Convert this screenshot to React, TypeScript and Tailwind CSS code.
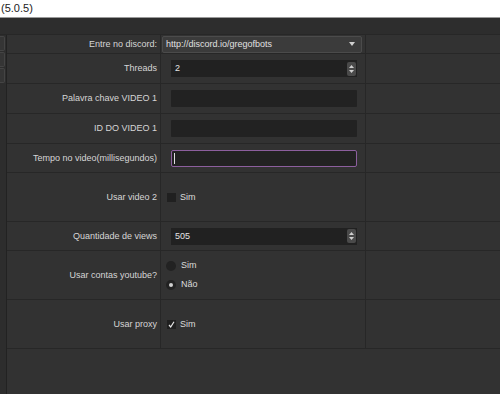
import { ReactNode } from "react";

function Row({ h, label, children }: { h: string; label: string; children?: ReactNode }) {
  return (
    <div className={`flex ${h} border-b border-[#272727]`}>
      <div className="w-[154px] shrink-0 flex items-center justify-end pr-[3px] border-r border-[#272727] text-[#d6d6d6]">
        {label}
      </div>
      <div className="w-[205px] shrink-0 flex flex-col justify-center border-r border-[#272727]">
        {children}
      </div>
      <div className="flex-1" />
    </div>
  );
}

function Spinner() {
  return (
    <div className="w-[9px] h-[14px] bg-[#4a4a4a] rounded-[2px] flex flex-col items-center justify-center gap-[2px] mr-[1px]">
      <svg width="5" height="3" viewBox="0 0 5 3">
        <path d="M0 3 L2.5 0 L5 3 Z" fill="#cfcfcf" />
      </svg>
      <svg width="5" height="3" viewBox="0 0 5 3">
        <path d="M0 0 L2.5 3 L5 0 Z" fill="#cfcfcf" />
      </svg>
    </div>
  );
}

export default function App() {
  return (
    <div
      className="w-[500px] h-[394px] overflow-hidden bg-[#323232] text-[9px] leading-none"
      style={{ fontFamily: '"Liberation Sans", Arial, sans-serif' }}
    >
      {/* title bar */}
      <div className="h-[18px] bg-white border-b border-[#9a9a9a] flex items-center pl-[1px] text-[#222] text-[11px]">
        (5.0.5)
      </div>
      {/* toolbar band */}
      <div className="h-[17px] bg-[#2d2d2d] border-b border-[#272727]" />

      <div className="flex">
        {/* side tabs */}
        <div className="w-[7px] shrink-0 border-r border-[#222] bg-[#2d2d2d] flex flex-col gap-[1px] pt-[1px] h-[360px]">
          <div className="h-[15px] w-[5px] bg-[#353535] border border-l-0 border-[#444] rounded-r-[2px]" />
          <div className="h-[15px] w-[5px] bg-[#353535] border border-l-0 border-[#444] rounded-r-[2px]" />
          <div className="h-[15px] w-[5px] bg-[#353535] border border-l-0 border-[#444] rounded-r-[2px]" />
        </div>

        <div className="flex-1">
          <Row h="h-[19px]" label="Entre no discord:">
            <div className="h-[17px] ml-[1px] mr-[3px] bg-[#3b3b3b] border border-[#4b4b4b] rounded-[2px] flex items-center justify-between pl-[3px] pr-[6px] text-[#e0e0e0]">
              <span>http://discord.io/gregofbots</span>
              <svg width="6" height="4" viewBox="0 0 6 4">
                <path d="M0 0 L6 0 L3 4 Z" fill="#d0d0d0" />
              </svg>
            </div>
          </Row>
          <Row h="h-[30px]" label="Threads">
            <div className="h-[17px] ml-[10px] mr-[8px] bg-[#212121] flex items-center justify-between pl-[4px] text-[#e4e4e4]">
              <span>2</span>
              <Spinner />
            </div>
          </Row>
          <Row h="h-[30px]" label="Palavra chave VIDEO 1">
            <div className="h-[17px] ml-[10px] mr-[8px] bg-[#222222] rounded-[1px]" />
          </Row>
          <Row h="h-[30px]" label="ID DO VIDEO 1">
            <div className="h-[17px] ml-[10px] mr-[8px] bg-[#222222] rounded-[1px]" />
          </Row>
          <Row h="h-[29px]" label="Tempo no video(millisegundos)">
            <div className="h-[17px] ml-[10px] mr-[8px] bg-[#222222] border border-[#8c5f9e] rounded-[2px] flex items-center pl-[2px]">
              <div className="w-px h-[11px] bg-[#e0e0e0]" />
            </div>
          </Row>
          <Row h="h-[49px]" label="Usar video 2">
            <div className="flex items-center gap-[4px] ml-[6px] text-[#dcdcdc]">
              <div className="w-[9px] h-[9px] bg-[#202020]" />
              <span>Sim</span>
            </div>
          </Row>
          <Row h="h-[29px]" label="Quantidade de views">
            <div className="h-[17px] ml-[10px] mr-[8px] bg-[#212121] flex items-center justify-between pl-[4px] text-[#e4e4e4]">
              <span>505</span>
              <Spinner />
            </div>
          </Row>
          <Row h="h-[49px]" label="Usar contas youtube?">
            <div className="flex flex-col gap-[9px] ml-[5px] text-[#dcdcdc]">
              <div className="flex items-center gap-[5px]">
                <div className="w-[10px] h-[10px] rounded-full bg-[#222222]" />
                <span>Sim</span>
              </div>
              <div className="flex items-center gap-[5px]">
                <div className="w-[10px] h-[10px] rounded-full bg-[#222222] flex items-center justify-center">
                  <div className="w-[4px] h-[4px] rounded-full bg-[#cfcfcf]" />
                </div>
                <span>Não</span>
              </div>
            </div>
          </Row>
          <Row h="h-[49px]" label="Usar proxy">
            <div className="flex items-center gap-[4px] ml-[6px] text-[#dcdcdc]">
              <div className="w-[9px] h-[9px] bg-[#202020] flex items-center justify-center">
                <svg width="7" height="7" viewBox="0 0 7 7">
                  <path d="M1 4 L2.7 6 L6 0.8" stroke="#e6e6e6" strokeWidth="1.2" fill="none" />
                </svg>
              </div>
              <span>Sim</span>
            </div>
          </Row>
        </div>
      </div>
    </div>
  );
}
